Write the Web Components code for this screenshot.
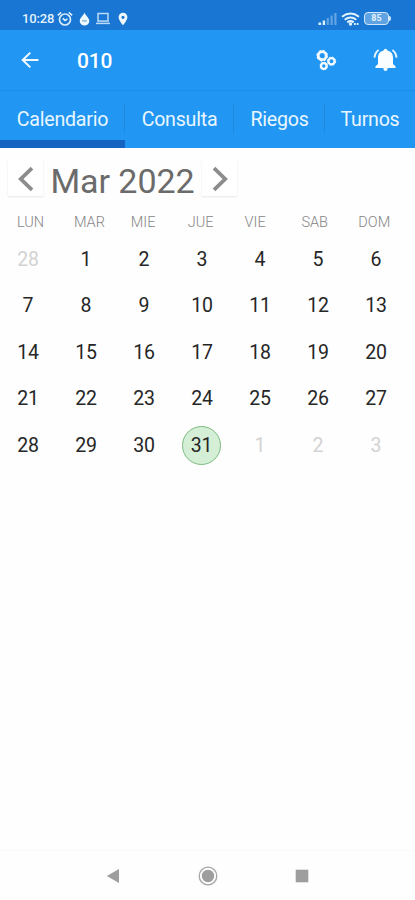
<!DOCTYPE html>
<html lang="es">
<head>
<meta charset="utf-8">
<title>010</title>
<style>
body{margin:0;width:415px;height:900px;overflow:hidden;background:#fefefe;font-family:Roboto,"Liberation Sans",sans-serif}
</style>
</head>
<body>
<phone-screen></phone-screen>
<script>
function define(name, html) {
  customElements.define(name, class extends HTMLElement {
    constructor() {
      super();
      this.attachShadow({mode: 'open'}).innerHTML = html;
    }
  });
}

define('status-bar', `<style>
:host{display:flex;box-sizing:border-box;height:30px;padding:7px 24px 0 22px;background:#1976d2;color:#e3f2fd;align-items:center;justify-content:space-between}
.g{display:flex;align-items:center}
.time{font-size:13px;font-weight:500;line-height:22px;width:35px;letter-spacing:-.15px}
svg{display:block}
.pct{box-sizing:border-box;width:25px;height:13px;border:1.6px solid #d2e9fc;border-radius:4px;font-size:9px;line-height:11px;text-align:center;font-weight:700;background:#5fa3e2}
.tip{width:2px;height:5px;background:#d2e9fc;border-radius:0 2px 2px 0}
</style>
<div class="g"><span class="time">10:28</span>
<svg width="16" height="16" viewBox="0 0 16 16" fill="none" stroke="#d8ecfd" stroke-width="1.7"><circle cx="8" cy="8.5" r="5.500"/><path d="M.8 4.3 4.2 1.400M15.200 4.3 11.8 1.400M5.8 7.3 8 9.4l2.4-1.4"/></svg>
<svg style="margin-left:6px" width="11" height="14" viewBox="0 0 11 14"><path d="M5.5.5C6.6 3.6 10.3 6 10.3 9a4.8 4.5 0 0 1-9.6 0C.7 6 4.4 3.6 5.5.5Z" fill="#eef8ff"/><path d="M3.2 8.9h4.6" stroke="#7fa9cc" stroke-width="1.3"/></svg>
<svg style="margin-left:6px" width="14" height="13" viewBox="0 0 14 13" fill="none" stroke="#b9dcf8" stroke-width="1.500"><rect x="2" y="1.5" width="10" height="7.6"/><path d="M0 11.400h14"/></svg>
<svg style="margin-left:8px" width="10" height="14" viewBox="0 0 10 14"><path fill="#f0f9ff" fill-rule="evenodd" d="M5 .8a4.4 4.4 0 0 1 4.4 4.4C9.4 8.2 5 13.2 5 13.2S.6 8.2.6 5.2A4.4 4.4 0 0 1 5 .8Zm0 2.9a1.6 1.6 0 1 0 0 3.2 1.6 1.6 0 0 0 0-3.2Z"/></svg></div>
<div class="g">
<svg width="19" height="14" viewBox="0 0 19 14"><path d="M.5 10.5h2.6V13H.5zM4.7 8.5h2.4V13H4.7z" fill="#dceffd"/><path d="M8.7 6h2.2v7H8.7zM12.5 3.5h2.2V13h-2.2zM16.3 1h2.2v12h-2.2z" fill="#62a5e4"/></svg>
<svg style="margin-left:4px" width="19" height="14" viewBox="0 0 19 14" fill="none" stroke="#e3f3ff" stroke-width="2"><path d="M1 4.7q8.5-6.4 17 0M3.7 7.700q5.8-4.4 11.6 0M6.3 10.400q3.2-2.5 6.4 0"/><circle cx="9.5" cy="12" r=".7"/><path d="M13 12h4.5" stroke-width="1.8" stroke-dasharray="1.8 1"/></svg>
<div class="pct" style="margin-left:4px">85</div><div class="tip"></div></div>`);

define('app-bar', `<style>
:host{display:flex;box-sizing:border-box;height:60px;background:#2196f3;align-items:center;padding:0 17px 1px 21px;color:#fff}
svg{display:block}
.t{font-size:21px;font-weight:500;line-height:24px;margin:2px auto 0 38px;letter-spacing:-.2px}
</style>
<svg width="18" height="18" viewBox="0 0 18 18" fill="none" stroke="#f2faff" stroke-width="2"><path d="M17.5 9H2M9.3 1.6 1.7 9l7.6 7.4"/></svg>
<span class="t">010</span>
<svg width="22" height="22" viewBox="0 0 22 22" fill="none" stroke="#f4fbff"><circle cx="7.2" cy="6.7" r="4" stroke-width="2.8"/><circle cx="7.2" cy="6.7" r="5.4" stroke-width="1" stroke-dasharray="2.2 2.04"/><circle cx="16.5" cy="12.2" r="3.1" stroke-width="2.3"/><circle cx="16.5" cy="12.2" r="4.2" stroke-width="1" stroke-dasharray="1.65 1.65"/><circle cx="8.8" cy="17" r="2.8" stroke-width="2.2"/><circle cx="8.8" cy="17" r="3.8" stroke-width="1" stroke-dasharray="1.5 1.5"/></svg>
<svg style="margin-left:36px" width="25" height="24" viewBox="0 0 25 24"><path fill="#fafdff" d="M12.5.8q1.700 0 1.900 1.800c3.800.8 5.600 3.500 5.600 7.200V16l2.600 2.500v1.500h-8q0 3-2.100 3t-2.100-3h-8v-1.500L5 16V9.800c0-3.700 1.800-6.400 5.600-7.200q.2-1.800 1.900-1.800Z"/><path fill="none" stroke="#e6f5ff" stroke-width="2" d="M5.600 2Q1.900 4.700 1.500 9.700M19.400 2q3.700 2.700 4.100 7.700"/></svg>`);

define('tab-item', `<style>
:host{display:flex;box-sizing:border-box;height:58px;flex:none;align-items:center;justify-content:center;font-size:19.6px;letter-spacing:-.22px;color:#e9f6ff;background:linear-gradient(#1e88dc,#1e88dc) right 14px/1px 29px no-repeat}
:host([active]){background:linear-gradient(#1e88dc,#1e88dc) 124px 14px/1px 29px no-repeat,linear-gradient(#1565c0,#1565c0) bottom/100% 8px no-repeat}
:host([last]){background:none}
span{line-height:24px;margin-top:2px}
</style><span><slot></slot></span>`);

define('tab-strip', `<style>
:host{display:flex;height:58px;background:#2196f3;overflow:hidden;box-shadow:inset 0 1px #1e8de8}
</style>
<tab-item active style="width:125px">Calendario</tab-item><tab-item style="width:109px">Consulta</tab-item><tab-item style="width:91px">Riegos</tab-item><tab-item last style="width:90px">Turnos</tab-item>`);

define('month-header', `<style>
:host{display:flex;align-items:flex-start;padding:12px 0 0 8px;height:48px;box-sizing:border-box;color:#6b6b6b}
.b{box-sizing:border-box;width:35px;height:36px;display:flex;align-items:center;justify-content:center;background:#fff;box-shadow:0 1px 2px #00000018}
.m{font-size:34px;line-height:40px;width:159px;text-align:center;white-space:nowrap;margin-top:1px;letter-spacing:-.05px}
svg{display:block;margin-top:2px}
</style>
<div class="b"><svg width="18" height="26" viewBox="0 0 18 26" fill="none" stroke="#8c8c8c" stroke-width="3.800"><path d="M15 2.200 3.800 13 15 23.800"/></svg></div>
<span class="m">Mar 2022</span>
<div class="b"><svg width="18" height="26" viewBox="0 0 18 26" fill="none" stroke="#8c8c8c" stroke-width="3.800"><path d="M3 2.200 14.200 13 3 23.800"/></svg></div>`);

const weekdays = ['LUN','MAR','MIE','JUE','VIE','SAB','DOM'];
const days = [28, ...Array.from({length: 31}, (_, i) => i + 1), 1, 2, 3];
define('month-grid', `<style>
:host{display:block}
.w{display:grid;grid-template-columns:repeat(7,56.9px);padding:18px 0 0 17px;font-size:14.5px;line-height:18px;color:#858585;font-weight:300}
.d{display:grid;grid-template-columns:repeat(7,58px);grid-auto-rows:46.5px;margin:4px 0 0 -1px;font-size:19.500px;letter-spacing:-.1px;color:#262626}
.d div{display:flex;align-items:center;justify-content:center}
.d .o{color:#d3d3d3}
.d .s span{box-sizing:border-box;width:39px;height:39px;border:1.6px solid #7dbb81;border-radius:50%;background:#d5efd6;display:flex;align-items:center;justify-content:center;margin-right:1px}
</style>
<div class="w">${weekdays.map(w => `<span>${w}</span>`).join('')}</div>
<div class="d">${days.map((n, i) => `<div class="${i < 1 || i > 31 ? 'o' : n === 31 ? 's' : ''}"><span>${n}</span></div>`).join('')}</div>`);

define('nav-bar', `<style>
:host{display:flex;box-sizing:border-box;height:50px;align-items:center;justify-content:space-between;padding:0 106px 0 106px}
svg{display:block}
</style>
<svg width="14" height="16" viewBox="0 0 14 16"><path d="M.8 8 13 1v14Z" fill="#9e9e9e"/></svg>
<svg width="20" height="20" viewBox="0 0 20 20"><circle cx="10" cy="10" r="8.800" fill="none" stroke="#a5a5a5" stroke-width="1.300"/><circle cx="10" cy="10" r="6.200" fill="#9e9e9e"/></svg>
<svg width="14" height="14" viewBox="0 0 14 14"><path d="M.7.7h12.600v12.600H.7Z" fill="#9e9e9e"/></svg>`);

define('phone-screen', `<style>
:host{display:flex;flex-direction:column;width:415px;height:900px}
main{flex:1}
nav-bar{border-top:1px solid #fafafa}
</style>
<status-bar></status-bar><app-bar></app-bar><tab-strip></tab-strip>
<main><month-header></month-header><month-grid></month-grid></main>
<nav-bar></nav-bar>`);
</script>
</body>
</html>
